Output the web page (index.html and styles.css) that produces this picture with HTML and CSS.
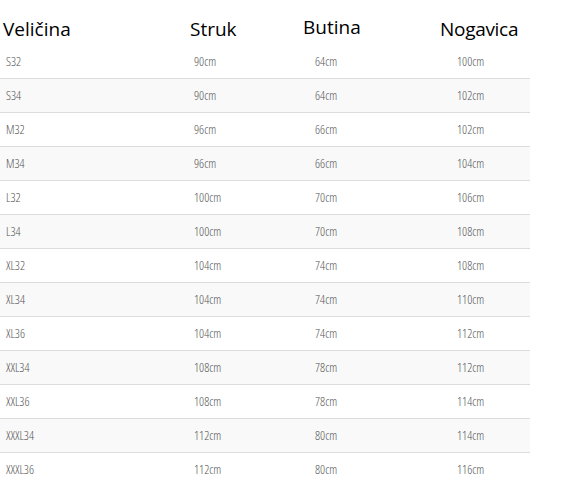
FILE: index.html
```html
<!DOCTYPE html>
<html>
<head>
<meta charset="utf-8">
<link rel="stylesheet" href="styles.css">
</head>
<body>
<table class="size-table">
  <colgroup>
    <col class="c1"><col class="c2"><col class="c3"><col class="c4">
  </colgroup>
  <thead>
    <tr>
      <th class="h1">Veličina</th>
      <th class="h2">Struk</th>
      <th class="h3">Butina</th>
      <th class="h4">Nogavica</th>
    </tr>
  </thead>
  <tbody>
    <tr><td><span>S32</span></td><td><span>90cm</span></td><td><span>64cm</span></td><td><span>100cm</span></td></tr>
    <tr><td><span>S34</span></td><td><span>90cm</span></td><td><span>64cm</span></td><td><span>102cm</span></td></tr>
    <tr><td><span>M32</span></td><td><span>96cm</span></td><td><span>66cm</span></td><td><span>102cm</span></td></tr>
    <tr><td><span>M34</span></td><td><span>96cm</span></td><td><span>66cm</span></td><td><span>104cm</span></td></tr>
    <tr><td><span>L32</span></td><td><span>100cm</span></td><td><span>70cm</span></td><td><span>106cm</span></td></tr>
    <tr><td><span>L34</span></td><td><span>100cm</span></td><td><span>70cm</span></td><td><span>108cm</span></td></tr>
    <tr><td><span>XL32</span></td><td><span>104cm</span></td><td><span>74cm</span></td><td><span>108cm</span></td></tr>
    <tr><td><span>XL34</span></td><td><span>104cm</span></td><td><span>74cm</span></td><td><span>110cm</span></td></tr>
    <tr><td><span>XL36</span></td><td><span>104cm</span></td><td><span>74cm</span></td><td><span>112cm</span></td></tr>
    <tr><td><span>XXL34</span></td><td><span>108cm</span></td><td><span>78cm</span></td><td><span>112cm</span></td></tr>
    <tr><td><span>XXL36</span></td><td><span>108cm</span></td><td><span>78cm</span></td><td><span>114cm</span></td></tr>
    <tr><td><span>XXXL34</span></td><td><span>112cm</span></td><td><span>80cm</span></td><td><span>114cm</span></td></tr>
    <tr><td><span>XXXL36</span></td><td><span>112cm</span></td><td><span>80cm</span></td><td><span>116cm</span></td></tr>
  </tbody>
</table>
</body>
</html>
```
FILE: styles.css
```css
html, body {
  margin: 0;
  padding: 0;
  background: #fff;
}
.size-table {
  width: 530px;
  border-collapse: collapse;
  table-layout: fixed;
  font-family: "Open Sans", "Noto Sans", sans-serif;
}
.c1 { width: 188px; }
.c2 { width: 121px; }
.c3 { width: 142px; }
.c4 { width: 79px; }

.size-table th {
  height: 40px;
  padding: 0 0 3px 0;
  font-size: 19px;
  font-weight: 400;
  color: #000;
  text-align: left;
  vertical-align: bottom;
  white-space: nowrap;
  line-height: 26px;
}
.h1 { text-indent: 3px; }
.h2 { text-indent: 2px; }
.h3 { text-indent: -6px; padding-bottom: 5px !important; }
.h4 { text-indent: -11px; letter-spacing: -0.3px; }

.size-table td {
  height: 33px;
  padding: 0 0 0 6px;
  font-size: 12.5px;
  font-weight: 300;
  color: #555;
  vertical-align: middle;
  white-space: nowrap;
}
.size-table td span {
  display: inline-block;
  font-stretch: 75%;
}
.size-table tbody tr + tr td {
  border-top: 1px solid #ddd;
}
.size-table tbody tr:nth-child(even) {
  background: #f9f9f9;
}
```
